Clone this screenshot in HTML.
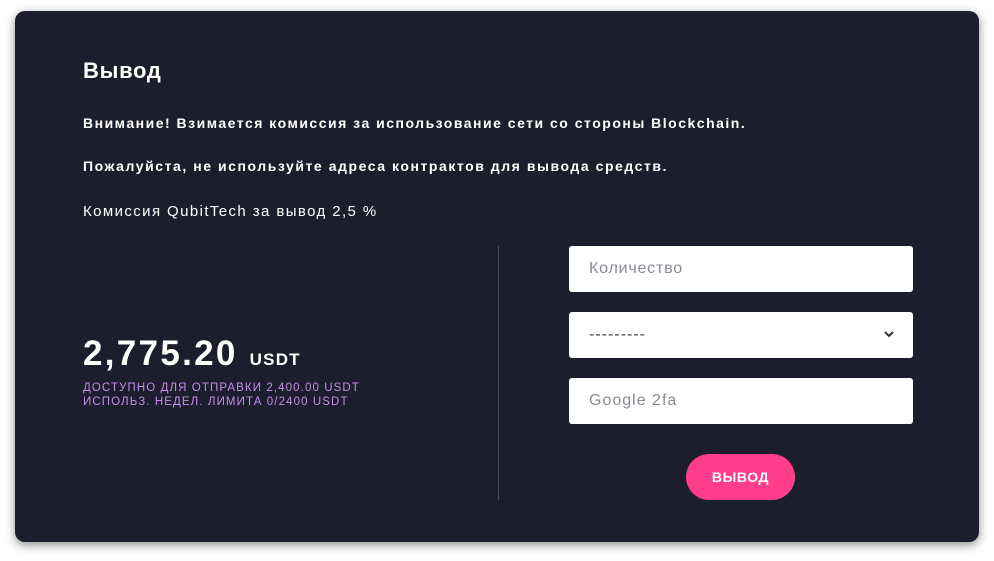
<!DOCTYPE html>
<html><head><meta charset="utf-8"><style>
*{margin:0;padding:0;box-sizing:border-box}
body{width:994px;height:561px;background:#fff;font-family:"Liberation Sans",sans-serif;position:relative;overflow:hidden}
.card{position:absolute;left:15px;top:11px;width:964px;height:531px;background:#1c1d2d;border-radius:10px;box-shadow:0 3px 10px rgba(0,0,0,.45)}
.t{position:absolute;left:83px;color:#fff;white-space:nowrap}
.in{position:absolute;left:569px;width:344px;height:46px;background:#fff;border-radius:3px;color:#8a8a93;font-size:16px;letter-spacing:1px;padding-left:20px;line-height:46px}
</style></head><body>
<div class="card"></div>
<div class="t" style="top:58px;font-size:22px;font-weight:bold;letter-spacing:.7px">Вывод</div>
<div class="t" style="top:115px;font-size:14px;font-weight:bold;letter-spacing:1.5px">Внимание! Взимается комиссия за использование сети со стороны Blockchain.</div>
<div class="t" style="top:158px;font-size:14px;font-weight:bold;letter-spacing:1.55px">Пожалуйста, не используйте адреса контрактов для вывода средств.</div>
<div class="t" style="top:203px;font-size:15px;letter-spacing:1.4px">Комиссия QubitTech за вывод 2,5 %</div>
<div class="t" style="top:334px;font-size:35px;font-weight:bold;letter-spacing:2.3px">2,775.20 <span style="font-size:17px;letter-spacing:1.2px">USDT</span></div>
<div class="t" style="top:381px;font-size:11.5px;color:#c58fe6;line-height:14px;letter-spacing:1.1px">ДОСТУПНО ДЛЯ ОТПРАВКИ 2,400.00 USDT<br>ИСПОЛЬЗ. НЕДЕЛ. ЛИМИТА 0/2400 USDT</div>
<div style="position:absolute;left:498px;top:246px;width:1px;height:254px;background:#4a4a66"></div>
<div class="in" style="top:246px;letter-spacing:.8px">Количество</div>
<div class="in" style="top:312px;color:#444">---------
<svg style="position:absolute;right:18px;top:18px" width="12" height="9" viewBox="0 0 12 9"><path d="M2 2l4 4 4-4" stroke="#333" stroke-width="2" fill="none"/></svg></div>
<div class="in" style="top:378px">Google 2fa</div>
<div style="position:absolute;left:686px;top:454px;width:109px;height:46px;border-radius:23px;background:#ff3d8b;color:#fff;font-weight:bold;font-size:14px;text-align:center;line-height:46px;letter-spacing:.6px">ВЫВОД</div>
</body></html>
